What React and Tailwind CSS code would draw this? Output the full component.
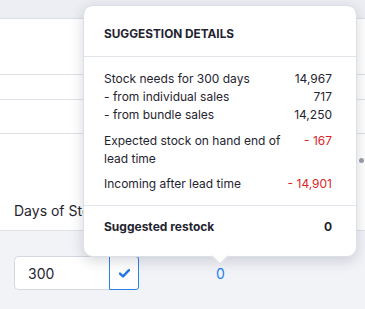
export default function App() {
    return (
        <div className="relative w-[365px] h-[309px] overflow-hidden bg-[#f2f3f7] font-['Inter',sans-serif] text-[#1f2430]">
            <div className="h-[19px] bg-[#eceef3] border-b border-[#d9dde5]" />
            <div className="bg-white">
                <div className="h-[56px] border-b border-[#dfe2e8]" />
                <div className="h-[25px] border-b border-[#dfe2e8]" />
                <div className="h-[34px] border-b border-[#dfe2e8]" />
                <div className="h-[97px] border-b border-[#dfe2e8] flex items-end justify-between pl-[14px] pb-[9px]">
                    <span className="text-[14px] leading-[20px]">Days of Stock</span>
                </div>
            </div>
            <div className="flex items-center pt-[25px] pl-[14px]">
                <div className="flex h-[34px]">
                    <div className="w-[95px] flex items-center pl-[13px] border border-r-0 border-[#d4d8e0] rounded-l-[5px] bg-white text-[14px]">
                        300
                    </div>
                    <button className="w-[30px] flex items-center justify-center border border-[#2f80ed] rounded-r-[3px] bg-white">
                        <svg width="11" height="9" viewBox="0 0 11 9">
                            <path d="M1 4.6 L4 7.4 L10 1.2" fill="none" stroke="#1f77e6" strokeWidth="2.4" strokeLinecap="round" strokeLinejoin="round" />
                        </svg>
                    </button>
                </div>
                <span className="ml-[77px] mt-[1px] text-[14px] text-[#1a7ff0]">0</span>
            </div>
            <span className="absolute left-[359px] top-[158px] w-[5px] h-[5px] rounded-full bg-[#9aa0aa]" />

            <div className="absolute left-[83px] top-[5px] w-[274px] rounded-[10px] bg-white border border-[#dcdfe5] shadow-[0_4px_14px_rgba(30,40,60,0.18)]">
                <div className="pl-[20px] pr-[24px] pt-[22px] pb-[16px] border-b border-[#e1e4ea]">
                    <h3 className="text-[11.8px] leading-[12px] font-bold uppercase">
                        Suggestion details
                    </h3>
                </div>
                <div className="pl-[20px] pr-[24px] pt-[13px] pb-[12px] flex flex-col text-[12px] leading-[18px]">
                    <div>
                        <div className="flex justify-between">
                            <span>Stock needs for 300 days</span>
                            <span>14,967</span>
                        </div>
                        <div className="flex justify-between">
                            <span>- from individual sales</span>
                            <span>717</span>
                        </div>
                        <div className="flex justify-between">
                            <span>- from bundle sales</span>
                            <span>14,250</span>
                        </div>
                    </div>
                    <div className="flex justify-between gap-3 mt-[8px]">
                        <span className="w-[180px]">Expected stock on hand end of lead time</span>
                        <span className="shrink-0 whitespace-nowrap text-[#dc1f1f]">- 167</span>
                    </div>
                    <div className="flex justify-between mt-[7px]">
                        <span>Incoming after lead time</span>
                        <span className="whitespace-nowrap text-[#dc1f1f]">- 14,901</span>
                    </div>
                </div>
                <div className="pl-[20px] pr-[24px] pt-[12px] pb-[20px] border-t border-[#e1e4ea] flex justify-between text-[12px] leading-[18px] font-bold">
                    <span>Suggested restock</span>
                    <span>0</span>
                </div>
                <div className="absolute left-1/2 -bottom-[6px] -ml-[6px] w-[12px] h-[12px] rotate-45 bg-white border-r border-b border-[#dcdfe5]" />
            </div>
        </div>
    );
}
